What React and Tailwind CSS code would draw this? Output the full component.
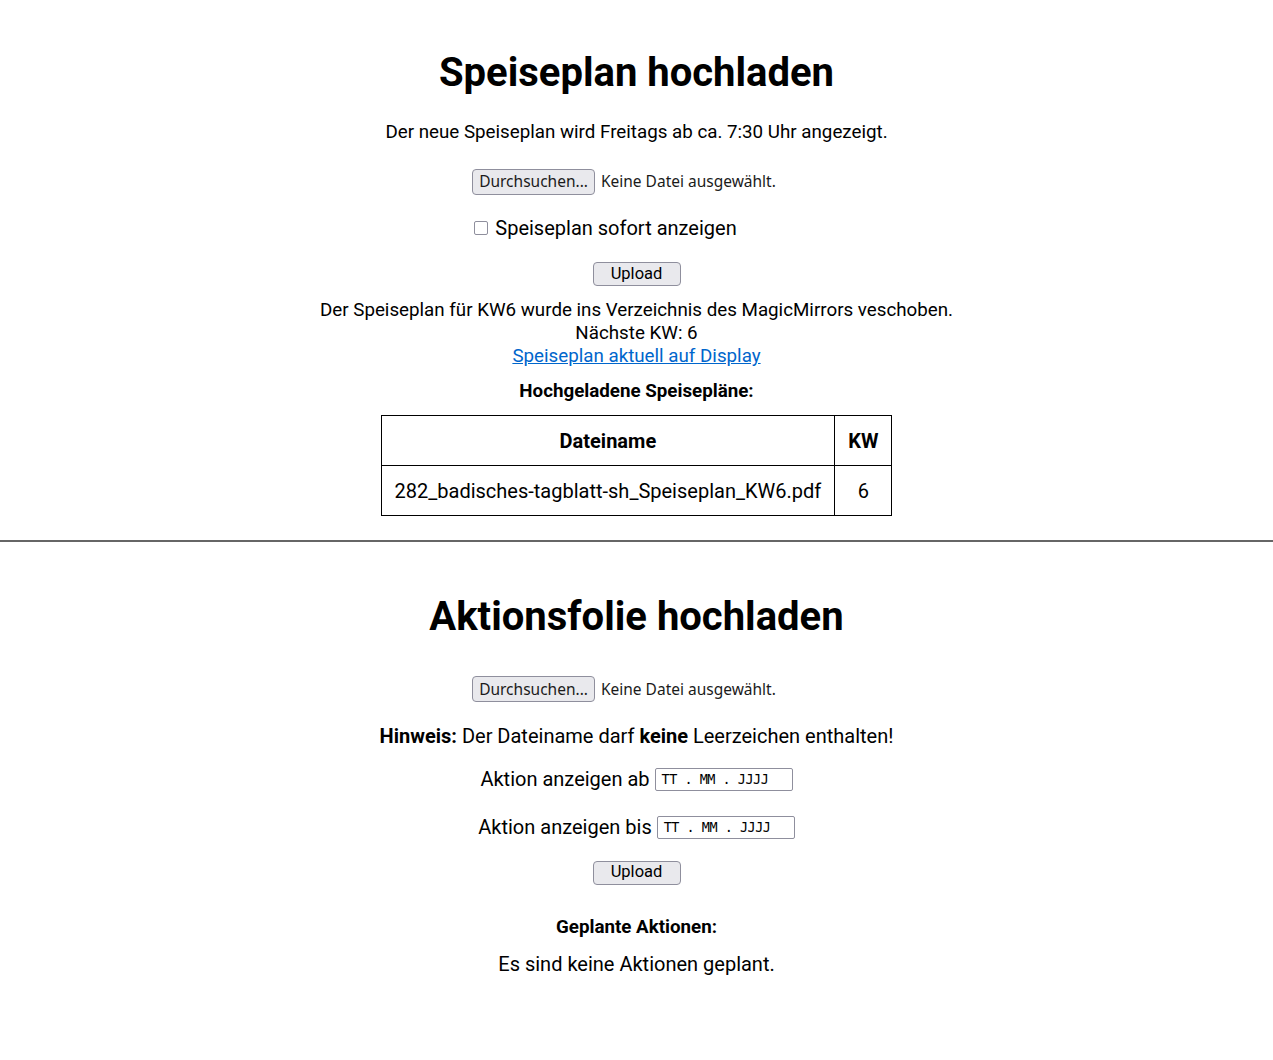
import React from "react";

function FileInput() {
  return (
    <div className="flex items-center justify-center gap-[6px] mr-[25px]">
      <button className="h-[26px] px-[6px] border border-[#8f8f9d] rounded-[4px] bg-[#e9e9ed] text-[15.5px] text-[#1b1b1b] font-['Noto_Sans',sans-serif] leading-none">
        Durchsuchen...
      </button>
      <span className="text-[15.5px] text-[#1b1b1b] font-['Noto_Sans',sans-serif]">Keine Datei ausgewählt.</span>
    </div>
  );
}

function UploadButton() {
  return (
    <button className="w-[88px] h-[24px] border border-[#8f8f9d] rounded-[4px] bg-[#e9e9ed] text-[16.5px] text-black leading-none">
      Upload
    </button>
  );
}

function DateInput() {
  return (
    <span className="inline-flex items-center w-[138px] h-[23px] border border-[#8f8f9d] rounded-[2px] bg-white px-[6px] text-[13.5px] tracking-[-0.5px] font-['DejaVu_Sans_Mono',monospace] text-black">
      TT . MM . JJJJ
    </span>
  );
}

export default function App() {
  return (
    <div className="bg-white text-black font-['Roboto',sans-serif] min-h-[1060px] flex flex-col">
      <section className="flex flex-col items-center pt-[49px]">
        <h1 className="text-[40px] font-bold leading-[48px]">Speiseplan hochladen</h1>
        <p className="text-[18.75px] leading-[23px] mt-[24px]">
          Der neue Speiseplan wird Freitags ab ca. 7:30 Uhr angezeigt.
        </p>
        <div className="mt-[25px]">
          <FileInput />
        </div>
        <label className="flex items-center gap-[7px] mt-[21px] mr-[62px] text-[20px] leading-[24px]">
          <span className="w-[14px] h-[14px] border border-[#8f8f9d] rounded-[2px] bg-white inline-block"></span>
          Speiseplan sofort anzeigen
        </label>
        <div className="mt-[22px]">
          <UploadButton />
        </div>
        <div className="flex flex-col items-center text-[18.75px] leading-[23px] mt-[13px]">
          <span>Der Speiseplan für KW6 wurde ins Verzeichnis des MagicMirrors veschoben.</span>
          <span>Nächste KW: 6</span>
          <a href="#" className="text-[#0066cc] underline">Speiseplan aktuell auf Display</a>
        </div>
        <p className="text-[18.75px] font-bold leading-[23px] mt-[12px]">Hochgeladene Speisepläne:</p>
        <table className="mt-[12px] border-collapse border border-black text-[20px]">
          <thead>
            <tr>
              <th className="border border-black h-[50px] px-[13px] text-[20px] font-bold">Dateiname</th>
              <th className="border border-black h-[50px] px-[13px] text-[20px] font-bold">KW</th>
            </tr>
          </thead>
          <tbody>
            <tr>
              <td className="border border-black h-[50px] px-[13px] text-center">282_badisches-tagblatt-sh_Speiseplan_KW6.pdf</td>
              <td className="border border-black h-[50px] px-[13px] text-center">6</td>
            </tr>
          </tbody>
        </table>
      </section>
      <div className="mt-[24px] h-[2px] bg-[#666666] w-full"></div>
      <section className="flex flex-col items-center pt-[51px]">
        <h2 className="text-[40px] font-bold leading-[48px]">Aktionsfolie hochladen</h2>
        <div className="mt-[35px]">
          <FileInput />
        </div>
        <p className="text-[20px] leading-[24px] mt-[22px]">
          <b>Hinweis:</b> Der Dateiname darf <b>keine</b> Leerzeichen enthalten!
        </p>
        <div className="flex items-center gap-[5px] mt-[19px] text-[20px] leading-[24px]">
          <span>Aktion anzeigen ab</span>
          <DateInput />
        </div>
        <div className="flex items-center gap-[5px] mt-[24px] text-[20px] leading-[24px]">
          <span>Aktion anzeigen bis</span>
          <DateInput />
        </div>
        <div className="mt-[21px]">
          <UploadButton />
        </div>
        <p className="text-[18.75px] font-bold leading-[23px] mt-[31px]">Geplante Aktionen:</p>
        <p className="text-[20px] leading-[24px] mt-[13px]">Es sind keine Aktionen geplant.</p>
      </section>
    </div>
  );
}
